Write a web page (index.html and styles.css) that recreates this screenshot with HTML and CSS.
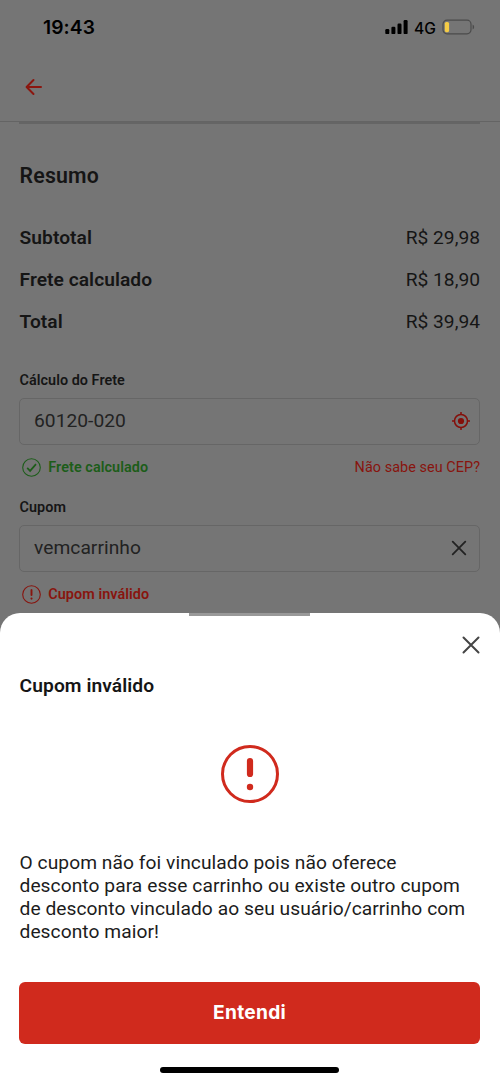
FILE: index.html
```html
<!DOCTYPE html>
<html lang="pt-BR">
<head>
<meta charset="utf-8">
<meta name="viewport" content="width=device-width, initial-scale=1">
<title>Resumo</title>
<link rel="stylesheet" href="styles.css">
</head>
<body>
<div class="screen">
  <div class="status-bar">
    <span class="clock">19:43</span>
    <div class="status-icons">
      <svg class="signal" width="24" height="16" viewBox="0 0 24 16"><rect x="0.3" y="10.1" width="4" height="5" rx="1.2"/><rect x="6.4" y="7.7" width="4" height="7.4" rx="1.2"/><rect x="12.5" y="4.5" width="4" height="10.6" rx="1.2"/><rect x="18.6" y="1.1" width="4" height="14" rx="1.2"/></svg>
      <span class="network">4G</span>
      <svg class="battery" width="33" height="16" viewBox="0 0 33 16"><rect x="1" y="1.2" width="28" height="13.6" rx="4" fill="none" stroke="#4b4b4b" stroke-width="1.2"/><rect x="2.8" y="2.9" width="4.3" height="10.3" rx="1.6" fill="#f4cb45"/><path d="M30.6 5.6c2 .8 2 4.2 0 5z" fill="#4b4b4b"/></svg>
    </div>
  </div>
  <header class="nav">
    <svg width="18" height="18" viewBox="0 0 18 18" class="line-icon back"><path d="M16 9H1.8M8.5 2 1.6 9l6.9 7"/></svg>
  </header>
  <main class="content">
    <div class="divider"></div>
    <h1 class="title">Resumo</h1>
    <dl class="totals">
      <div class="total-row"><dt>Subtotal</dt><dd>R$ 29,98</dd></div>
      <div class="total-row"><dt>Frete calculado</dt><dd>R$ 18,90</dd></div>
      <div class="total-row"><dt>Total</dt><dd>R$ 39,94</dd></div>
    </dl>
    <section class="field">
      <div class="label">Cálculo do Frete</div>
      <div class="input">
        <span>60120-020</span>
        <svg class="locate" width="18" height="18" viewBox="0 0 18 18"><circle cx="9" cy="9" r="6.5" fill="none" stroke="currentColor" stroke-width="1.5"/><circle cx="9" cy="9" r="3.1" fill="currentColor"/><path d="M9 0v3M9 15v3M0 9h3M15 9h3" stroke="currentColor" stroke-width="1.5"/></svg>
      </div>
      <div class="hint success">
        <svg class="hint-icon" width="19" height="19" viewBox="0 0 19 19"><circle cx="9.5" cy="9.5" r="8.8" stroke-width="1.1"/><path d="m5.2 9.9 2.9 3 5.9-6.8" stroke-width="1.7"/></svg>
        <span>Frete calculado</span>
        <a class="link">Não sabe seu CEP?</a>
      </div>
    </section>
    <section class="field">
      <div class="label">Cupom</div>
      <div class="input">
        <span>vemcarrinho</span>
        <svg class="line-icon clear" width="16" height="16" viewBox="0 0 16 16"><path d="m1.7 1.7 12.6 12.6M14.3 1.7 1.7 14.3"/></svg>
      </div>
      <div class="hint error">
        <svg class="hint-icon" width="19" height="19" viewBox="0 0 19 19"><circle cx="9.5" cy="9.5" r="8.8" stroke-width="1.1"/><path d="M9.5 5v5" stroke-width="1.9" stroke-linecap="round"/><path d="M9.5 13.5v.1" stroke-width="2.1" stroke-linecap="round"/></svg>
        <span>Cupom inválido</span>
      </div>
    </section>
  </main>
  <div class="sheet">
    <div class="grabber"></div>
    <svg class="line-icon close" width="18" height="18" viewBox="0 0 18 18"><path d="m1.5 1.5 15 15M16.5 1.5l-15 15"/></svg>
    <h2 class="sheet-title">Cupom inválido</h2>
    <svg class="alert" width="58" height="58" viewBox="0 0 58 58"><circle cx="29" cy="29" r="27.5" fill="none" stroke="#d02a1d" stroke-width="3"/><path d="M29 16v13" stroke="#d02a1d" stroke-width="6.2" stroke-linecap="round"/><circle cx="29" cy="42" r="3.2" fill="#d02a1d"/></svg>
    <p class="message">O cupom não foi vinculado pois não oferece<br>desconto para esse carrinho ou existe outro cupom<br>de desconto vinculado ao seu usuário/carrinho com<br>desconto maior!</p>
    <button class="confirm">Entendi</button>
    <div class="home-indicator"></div>
  </div>
</div>
</body>
</html>
```
FILE: styles.css
```css
* { box-sizing: border-box; }
body { margin: 0; background: #757575; font-family: Roboto, "Liberation Sans", sans-serif; color: #151515; }
h1, h2, dl, dd, p { margin: 0; }
svg { display: block; flex: none; }
.screen { position: relative; width: 500px; height: 1082px; overflow: hidden; background: #757575; }
.status-bar { display: flex; justify-content: space-between; height: 54px; padding: 15px 25px 0 43px; color: #000; font-family: Inter, sans-serif; }
.clock { font-size: 19.2px; line-height: 25px; font-weight: 600; letter-spacing: .1px; }
.status-icons { display: flex; align-items: flex-start; padding-top: 4px; }
.network { margin-left: 5px; width: 28px; font-size: 15.6px; line-height: 19px; font-weight: 450; }
.signal { fill: #000; }
.line-icon { fill: none; stroke: currentColor; stroke-width: 2; stroke-linecap: round; stroke-linejoin: round; }
.nav { height: 68px; padding: 24px 25px 0; border-bottom: 1px solid #646464; color: #8b160f; }
.content { padding: 0 20px 0 19px; }
.divider { height: 2px; background: #656565; }
.title { margin-top: 38.5px; padding-left: .6px; font-size: 21.3px; line-height: 26px; font-weight: 600; letter-spacing: .16px; }
.totals { margin-top: 28px; font-size: 19.2px; }
.total-row { display: flex; justify-content: space-between; height: 42.2px; line-height: 41px; }
.total-row dt { padding-left: .6px; font-weight: 600; letter-spacing: .04px; }
.field { height: 127px; }
.totals + .field { margin-top: 27.5px; }
.label { height: 20px; padding-left: .6px; font-size: 14.4px; line-height: 20px; font-weight: 600; letter-spacing: .03px; }
.input { display: flex; align-items: center; justify-content: space-between; height: 47px; margin-top: 7.3px; padding: 0 9.5px 0 14px; border: 1.5px solid #666; border-radius: 5px; color: #222; font-size: 19.2px; letter-spacing: .04px; }
.input span { margin-top: -2px; }
.locate { color: #850f0a; }
.clear { margin-right: 3px; color: #222; stroke-width: 1.8; }
.hint { display: flex; align-items: center; height: 20px; margin-top: 12.7px; padding-left: 3px; font-size: 14.4px; font-weight: 600; letter-spacing: .06px; }
.hint-icon { margin-right: 7.3px; fill: none; stroke: currentColor; }
.success { color: #1c5d19; }
.error { color: #88140e; }
.link { margin-left: auto; color: #88140e; font-weight: 400; }
.sheet { position: absolute; inset: 613.4px 0 0; display: flex; flex-direction: column; padding: 0 20px 9.5px 19px; border-radius: 20px 20px 0 0; background: #fff; }
.grabber { align-self: center; width: 121px; height: 2.5px; background: #999; }
.close { align-self: flex-end; margin: 20px 0 0; color: #454545; }
.sheet-title { margin-top: 18px; padding-left: .6px; font-size: 19.2px; line-height: 27px; font-weight: 600; letter-spacing: .08px; }
.alert { align-self: center; margin-top: 46px; }
.message { margin-top: 48.3px; padding-left: .5px; font-size: 19.2px; line-height: 23px; letter-spacing: .06px; white-space: nowrap; color: #1c1c1c; }
.confirm { height: 62px; margin-top: auto; padding: 0 0 1px; border: 0; border-radius: 6px; background: #d02a1d; color: #fff; font: 700 19.2px Inter, sans-serif; letter-spacing: .25px; }
.home-indicator { align-self: center; width: 179px; height: 6px; margin-top: 23px; border-radius: 3px; background: #000; }
```
